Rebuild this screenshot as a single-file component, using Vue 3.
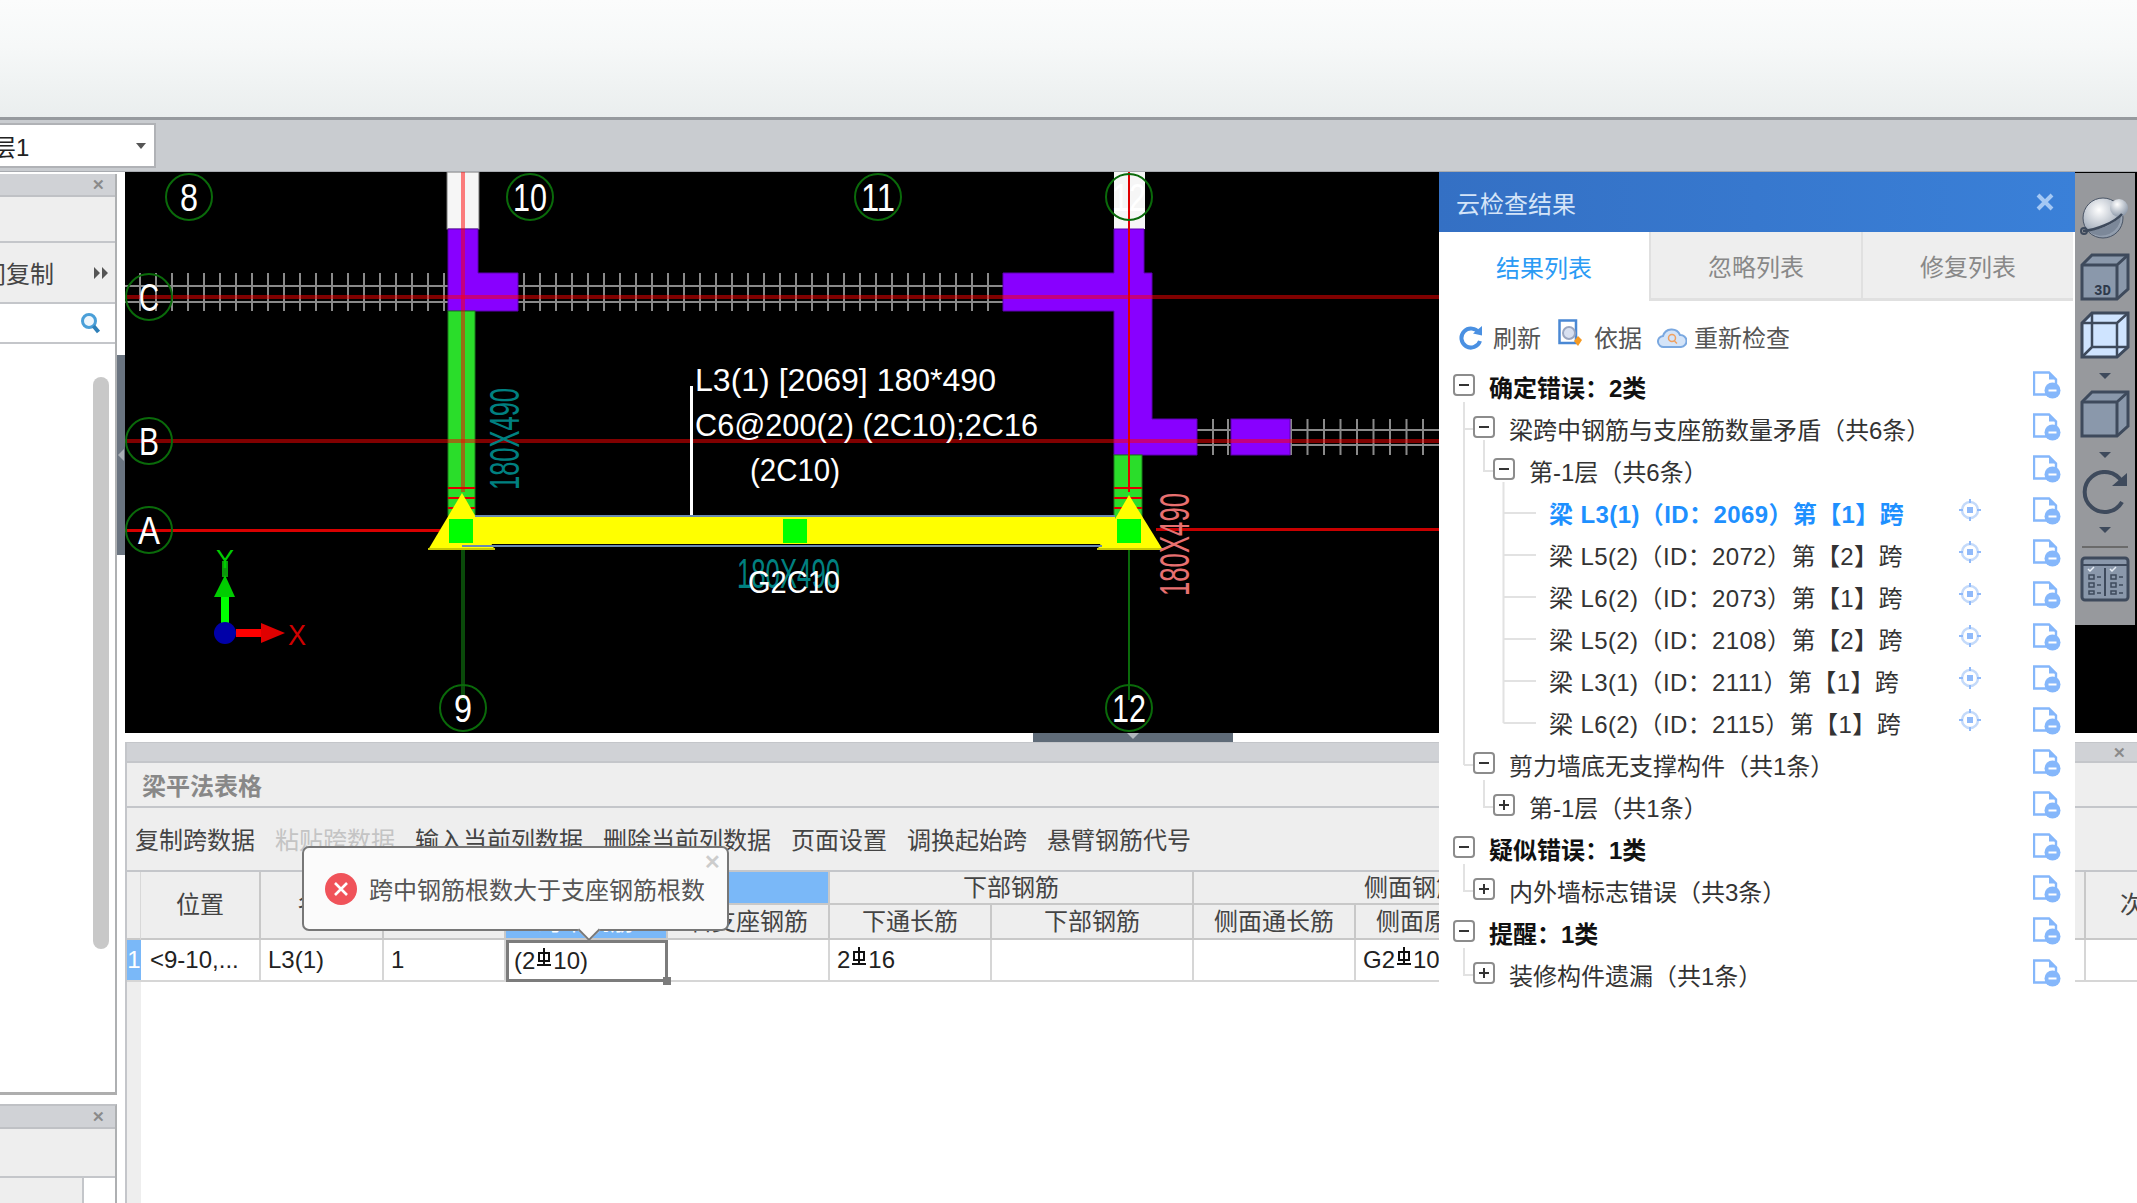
<script setup>
const range = (a, b, s) => { const r = []; for (let x = a; x <= b; x += s) r.push(x); return r; };
const ticksC = [...range(140, 444, 16), ...range(524, 1000, 16)];
const ticksB = [1213, 1228, ...range(1291, 1437, 16.5)];
const axes = [
  { t: '8', x: 189, y: 197, w: 18 }, { t: '10', x: 530, y: 197, w: 34 }, { t: '11', x: 878, y: 197, w: 34 },
  { t: '12', x: 1129, y: 197, w: 34 }, { t: 'C', x: 149, y: 297, w: 20 }, { t: 'B', x: 149, y: 441, w: 20 },
  { t: 'A', x: 149, y: 530, w: 22 }, { t: '9', x: 463, y: 708, w: 18 }, { t: '12', x: 1129, y: 708, w: 34 },
];
const toolbarItems = [
  { t: '复制跨数据' }, { t: '粘贴跨数据', off: true }, { t: '输入当前列数据' }, { t: '删除当前列数据' },
  { t: '页面设置' }, { t: '调换起始跨' }, { t: '悬臂钢筋代号' },
];
const rows = [
  { lv: 0, exp: '-', t: '确定错误：2类', bold: true },
  { lv: 1, exp: '-', t: '梁跨中钢筋与支座筋数量矛盾（共6条）' },
  { lv: 2, exp: '-', t: '第-1层（共6条）' },
  { lv: 3, t: '梁 L3(1)（ID：2069）第【1】跨', active: true },
  { lv: 3, t: '梁 L5(2)（ID：2072）第【2】跨' },
  { lv: 3, t: '梁 L6(2)（ID：2073）第【1】跨' },
  { lv: 3, t: '梁 L5(2)（ID：2108）第【2】跨' },
  { lv: 3, t: '梁 L3(1)（ID：2111）第【1】跨' },
  { lv: 3, t: '梁 L6(2)（ID：2115）第【1】跨' },
  { lv: 1, exp: '-', t: '剪力墙底无支撑构件（共1条）' },
  { lv: 2, exp: '+', t: '第-1层（共1条）' },
  { lv: 0, exp: '-', t: '疑似错误：1类', bold: true },
  { lv: 1, exp: '+', t: '内外墙标志错误（共3条）' },
  { lv: 0, exp: '-', t: '提醒：1类', bold: true },
  { lv: 1, exp: '+', t: '装修构件遗漏（共1条）' },
];
</script>

<template>
  <div class="app">
    <div class="topbar"></div>
    <div class="subbar">
      <div class="combo">
        <span class="combo-text">层1</span>
        <svg class="combo-arrow" width="12" height="8" viewBox="0 0 12 8"><path d="M1 1h10L6 7z" fill="#555" /></svg>
      </div>
    </div>

    <div class="main">
      <aside class="left">
        <div class="lp lp-top">
          <div class="lp-head"><span class="x">✕</span></div>
          <div class="lp-blank"></div>
          <div class="lp-row">
            <span class="lp-label">层间复制</span>
            <svg width="16" height="14" viewBox="0 0 16 14"><path d="M1 1l6 6-6 6zM9 1l6 6-6 6z" fill="#555" /></svg>
          </div>
          <div class="lp-search">
            <svg width="22" height="24" viewBox="0 0 22 24"><circle cx="9" cy="10" r="6.5" fill="#eef6fc" stroke="#4a9fd8" stroke-width="3" /><path d="M13.5 15l5 6" stroke="#2d7fb8" stroke-width="4" /></svg>
          </div>
          <div class="lp-list"><div class="lp-scroll"></div></div>
        </div>
        <div class="lp lp-bottom">
          <div class="lp-head"><span class="x">✕</span></div>
          <div class="lp-blank2"></div>
          <div class="lp-foot"><div class="lp-foot-l"></div><div class="lp-foot-r"><div class="foot-thumb"></div></div></div>
        </div>
      </aside>

      <div class="vsplit"><div class="vthumb"><span class="vtri"></span></div></div>

      <div class="work">
        <div class="canvas">
          <svg class="cad" width="2012" height="561" viewBox="125 172 2012 561">
            <rect x="125" y="172" width="2012" height="561" fill="#000" />
            <!-- walls -->
            <g stroke="#8a8a8a" stroke-width="2">
              <path d="M125 286H448M125 302H448M518 286H1003M518 302H1003M1197 430H1231M1197 445H1231M1290 430H1440M1290 445H1440" />
              <path v-for="x in ticksC" :key="'c' + x" :d="`M${x} 273V311`" />
              <path v-for="x in ticksB" :key="'b' + x" :d="`M${x} 419V455`" />
            </g>
            <!-- upper white stubs -->
            <rect x="447" y="172" width="32" height="57" fill="#f6f6f6" stroke="#777" stroke-width="1" />
            <rect x="1114" y="172" width="31" height="57" fill="#f6f6f6" />
            <!-- purple -->
            <path d="M448 229H478V273H518V311H448z" fill="#8800ff" stroke="#5d00b0" stroke-width="1" />
            <path d="M1114 229H1144V273H1152V419H1197V455H1114V311H1003V273H1114z" fill="#8800ff" stroke="#5d00b0" stroke-width="1" />
            <rect x="1231" y="419" width="59" height="36" fill="#8800ff" stroke="#5d00b0" stroke-width="1" />
            <!-- green columns -->
            <rect x="448" y="311" width="27" height="205" fill="#2add2a" stroke="#1b7a1b" stroke-width="1" />
            <rect x="1114" y="455" width="28" height="65" fill="#2add2a" stroke="#1b7a1b" stroke-width="1" />
            <!-- axis lines -->
            <rect x="125" y="295" width="1315" height="4" fill="#f00" opacity=".5" />
            <rect x="125" y="439" width="1315" height="4" fill="#f00" opacity=".5" />
            <rect x="125" y="529" width="315" height="3" fill="#d80000" />
            <rect x="1156" y="528" width="284" height="3" fill="#c80000" />
            <rect x="461" y="172" width="4" height="320" fill="#f00" opacity=".5" />
            <rect x="1128" y="172" width="2" height="320" fill="#e00000" />
            <path d="M448 488H475M448 498H475M448 508H475M1114 488H1142M1114 498H1142M1114 508H1142" stroke="#e00000" stroke-width="2" />
            <rect x="461" y="550" width="4" height="150" fill="#0a4a0a" />
            <rect x="1128" y="550" width="2" height="150" fill="#0a6a0a" />
            <!-- triangles -->
            <path d="M462 493L495 550H428z" fill="#ff0" />
            <path d="M1129 495L1163 550H1097z" fill="#ff0" />
            <path d="M428 549H495M1097 549H1163" stroke="#c8c800" stroke-width="2" />
            <!-- beam -->
            <rect x="475" y="515" width="640" height="2" fill="#6a8ab0" />
            <rect x="475" y="517" width="640" height="27" fill="#ff0" />
            <rect x="462" y="545" width="640" height="2" fill="#6a8ab0" />
            <rect x="449" y="519" width="24" height="24" fill="#0f0" />
            <rect x="783" y="519" width="24" height="24" fill="#0f0" />
            <rect x="1117" y="519" width="24" height="24" fill="#0f0" />
            <!-- leader -->
            <rect x="690" y="386" width="3" height="129" fill="#fff" />
            <!-- labels -->
            <g class="cad-text">
              <text x="695" y="391" textLength="301" lengthAdjust="spacingAndGlyphs" font-size="32">L3(1) [2069] 180*490</text>
              <text x="695" y="436" textLength="343" lengthAdjust="spacingAndGlyphs" font-size="32">C6@200(2) (2C10);2C16</text>
              <text x="750" y="481" textLength="90" lengthAdjust="spacingAndGlyphs" font-size="32">(2C10)</text>
              <text class="teal" x="737" y="588" textLength="103" lengthAdjust="spacingAndGlyphs" font-size="42">180X490</text>
              <text x="748" y="593" textLength="92" lengthAdjust="spacingAndGlyphs" font-size="32">G2C10</text>
              <text class="teal" transform="translate(519 490) rotate(-90)" textLength="102" lengthAdjust="spacingAndGlyphs" font-size="42">180X490</text>
              <text class="salmon" transform="translate(1189 596) rotate(-90)" textLength="103" lengthAdjust="spacingAndGlyphs" font-size="42">180X490</text>
            </g>
            <g v-for="(a, i) in axes" :key="i">
              <circle :cx="a.x" :cy="a.y" r="23" fill="none" stroke="#0a6a0a" stroke-width="2" />
              <text class="axis-t" :x="a.x - a.w / 2" :y="a.y + 14" :textLength="a.w" lengthAdjust="spacingAndGlyphs" font-size="38">{{ a.t }}</text>
            </g>
            <!-- UCS -->
            <rect x="222" y="561" width="6" height="16" fill="#0a9a0a" />
            <path d="M225 575L235 597H214z" fill="#0c0" />
            <rect x="221" y="597" width="8" height="26" fill="#0f0" />
            <rect x="236" y="629" width="26" height="8" fill="#f00" />
            <path d="M261 623L285 633L261 643z" fill="#e00000" />
            <circle cx="225" cy="633" r="11" fill="#0000a8" />
            <text class="ucs" x="216" y="568" font-size="25" fill="#0c0" textLength="18" lengthAdjust="spacingAndGlyphs">Y</text>
            <text class="ucs" x="288" y="645" font-size="30" fill="#d00000" textLength="18" lengthAdjust="spacingAndGlyphs">X</text>
          </svg>
        </div>

        <div class="hsplit"><div class="hthumb"><span class="htri"></span></div></div>

        <section class="bottom">
          <div class="b-head"><span class="x b-x">✕</span></div>
          <div class="b-title">梁平法表格</div>
          <div class="b-tools">
            <span v-for="it in toolbarItems" :key="it.t" :class="{ off: it.off }">{{ it.t }}</span>
          </div>

          <div class="grid">
            <div class="c h gut r2"></div>
            <div class="c h r2">位置</div>
            <div class="c h r2">名称</div>
            <div class="c h r2">跨号</div>
            <div class="c h blue span2">上部钢筋</div>
            <div class="c h span2">下部钢筋</div>
            <div class="c h span2">侧面钢筋</div>
            <div class="c h r2"></div>
            <div class="c h r2 ciliang">次梁宽度</div>
            <div class="c h blue2">跨中钢筋</div>
            <div class="c h">右支座钢筋</div>
            <div class="c h">下通长筋</div>
            <div class="c h">下部钢筋</div>
            <div class="c h">侧面通长筋</div>
            <div class="c h side">侧面原位标注筋</div>

            <div class="c d gut-on">1</div>
            <div class="c d l pos">&lt;9-10,...</div>
            <div class="c d l">L3(1)</div>
            <div class="c d l">1</div>
            <div class="c d l cur">
              (2<svg class="bar" width="18" height="19" viewBox="0 0 18 19"><path d="M4 5h10v8H4zM9 0v17M2 17h14" fill="none" stroke="#111" stroke-width="2" /></svg>10)
              <span class="handle"></span>
            </div>
            <div class="c d"></div>
            <div class="c d l">2<svg class="bar" width="18" height="19" viewBox="0 0 18 19"><path d="M4 5h10v8H4zM9 0v17M2 17h14" fill="none" stroke="#111" stroke-width="2" /></svg>16</div>
            <div class="c d"></div>
            <div class="c d"></div>
            <div class="c d l g2">G2<svg class="bar" width="18" height="19" viewBox="0 0 18 19"><path d="M4 5h10v8H4zM9 0v17M2 17h14" fill="none" stroke="#111" stroke-width="2" /></svg>10</div>
            <div class="c d"></div>
            <div class="c d"></div>
          </div>
          <div class="rest"><div class="rest-gut"></div></div>

          <div class="tip">
            <span class="tip-x">✕</span>
            <svg width="32" height="32" viewBox="0 0 32 32"><circle cx="16" cy="16" r="16" fill="#f0535a" /><path d="M10 10l12 12M22 10L10 22" stroke="#fff" stroke-width="2.6" /></svg>
            <span class="tip-text">跨中钢筋根数大于支座钢筋根数</span>
            <span class="tip-arrow"></span>
          </div>
        </section>
      </div>

      <!-- floating result panel -->
      <div class="panel">
        <div class="p-title">
          <span>云检查结果</span>
          <svg width="20" height="20" viewBox="0 0 20 20"><path d="M3 3l14 14M17 3L3 17" stroke="#a4c8f4" stroke-width="4" /></svg>
        </div>
        <div class="tabs">
          <div class="tab on">结果列表</div>
          <div class="tab">忽略列表</div>
          <div class="tab">修复列表</div>
        </div>
        <div class="p-tools">
          <svg width="24" height="26" viewBox="0 0 24 26"><path d="M20 9A9.5 9.5 0 1 0 21 17" fill="none" stroke="#4a90e2" stroke-width="4" /><path d="M14 9.5L23 2v9.500z" fill="#4a90e2" /></svg>
          <span class="tt t1">刷新</span>
          <svg class="ic2" width="26" height="30" viewBox="0 0 26 30"><path d="M1.500 1.500H18V24H1.500z" fill="#fff" stroke="#4a88d4" stroke-width="2.500" /><circle cx="11" cy="14" r="6" fill="#d8e0f0" stroke="#9aa6c0" stroke-width="2" /><path d="M20 17l4 4-4 6-4-5z" fill="#f59a23" /></svg>
          <span class="tt t2">依据</span>
          <svg class="ic3" width="30" height="24" viewBox="0 0 30 24"><path d="M7 22a5.500 5.500 0 0 1-1-11 9 9 0 0 1 17-1 6 6 0 0 1 1 12z" fill="#d4e4f8" stroke="#7aa8e0" stroke-width="2" /><circle cx="15" cy="13" r="3.500" fill="none" stroke="#f0a060" stroke-width="1.500" /><path d="M17.500 16l2.500 2.500" stroke="#f0a060" stroke-width="1.500" /></svg>
          <span class="tt t3">重新检查</span>
        </div>

        <div class="tree">
          <svg class="links" width="100" height="620" viewBox="0 0 100 620">
            <path d="M24 36V399M24 63H33M24 399H33M24 498V525H33M24 582V609H33M44 74V105H54M44 414V441H54M63.500 116V357M63.500 147H96M63.500 189H96M63.500 231H96M63.500 273H96M63.500 315H96M63.500 357H96" fill="none" stroke="#e2e2e2" stroke-width="2" />
          </svg>
          <div v-for="(r, i) in rows" :key="i" class="row" :class="['lv' + r.lv, { bold: r.bold, hot: r.active }]">
            <svg v-if="r.exp" class="exp" width="22" height="22" viewBox="0 0 22 22">
              <rect x="1" y="1" width="20" height="20" rx="3" fill="#fff" stroke="#8c8c8c" stroke-width="2" />
              <path v-if="r.exp === '-'" d="M6 11h10" stroke="#333" stroke-width="2" />
              <path v-else d="M6 11h10M11 6v10" stroke="#333" stroke-width="2" />
            </svg>
            <span class="label">{{ r.t }}</span>
            <span class="grow"></span>
            <svg v-if="r.lv === 3" class="target" width="24" height="24" viewBox="0 0 24 24">
              <circle cx="12" cy="12" r="8" fill="none" stroke="#c4dafa" stroke-width="2.500" />
              <path d="M12 1v4M12 19v4M1 12h4M19 12h4" stroke="#90bafa" stroke-width="2" />
              <rect x="9" y="9" width="6" height="6" fill="#90bafa" />
            </svg>
            <svg class="file" width="28" height="28" viewBox="0 0 28 28">
              <path d="M1 1.500H16L23 8.500V23.500H1z" fill="#fff" stroke="#85b7fb" stroke-width="2.400" />
              <path d="M16 1.500V8.500H23" fill="#85b7fb" />
              <circle cx="19.500" cy="19.500" r="8" fill="#85b7fb" />
              <path d="M15.500 19.500h8" stroke="#fff" stroke-width="2" />
            </svg>
          </div>
        </div>
      </div>

      <!-- floating view strip -->
      <div class="strip">
        <svg class="i1" width="54" height="46" viewBox="0 0 54 46">
          <defs>
            <radialGradient id="ball" cx=".4" cy=".3" r=".8"><stop offset="0" stop-color="#fff" /><stop offset="1" stop-color="#7d8b9e" /></radialGradient>
          </defs>
          <circle cx="25" cy="24" r="20" fill="url(#ball)" stroke="#4a5566" stroke-width="1" />
          <path d="M10 37C22 36 36 30 43 22A20 20 0 0 1 10 37z" fill="#7c8899" />
          <circle cx="41" cy="14" r="9" fill="url(#ball)" />
          <path d="M5 37C18 36 36 29 44 20" fill="none" stroke="#3e4a5c" stroke-width="2.500" />
          <circle cx="6" cy="37" r="3" fill="none" stroke="#3e4a5c" stroke-width="2" />
        </svg>
        <svg class="i2" width="50" height="48" viewBox="0 0 50 48">
          <path d="M2 12L12 2H48V36L37 46H2z" fill="#8a98ab" stroke="#3e4a5c" stroke-width="3" />
          <path d="M2 12H37V46M37 12L48 2" fill="none" stroke="#3e4a5c" stroke-width="3" />
          <text class="txt3d" x="14" y="42" font-size="14">3D</text>
        </svg>
        <svg class="i3" width="50" height="48" viewBox="0 0 50 48">
          <path d="M2 12L12 2H48V36L37 46H2z" fill="#cfe4ff" stroke="#3e4a5c" stroke-width="3" />
          <path d="M2 12H37V46M37 12L48 2M12 2V36H48M12 36L2 46" fill="none" stroke="#3e4a5c" stroke-width="2.500" />
        </svg>
        <svg class="arr" width="14" height="8" viewBox="0 0 14 8"><path d="M1 1h12L7 7z" fill="#3e4a5c" /></svg>
        <svg class="i4" width="50" height="48" viewBox="0 0 50 48">
          <path d="M2 12L12 2H48V36L37 46H2z" fill="#8a98ab" stroke="#3e4a5c" stroke-width="3" />
          <path d="M2 12H37V46M37 12L48 2" fill="none" stroke="#3e4a5c" stroke-width="3" />
        </svg>
        <svg class="arr a2" width="14" height="8" viewBox="0 0 14 8"><path d="M1 1h12L7 7z" fill="#3e4a5c" /></svg>
        <svg class="i5" width="50" height="46" viewBox="0 0 50 46">
          <path d="M42 12A20 20 0 1 0 42 32" fill="none" stroke="#3e4a5c" stroke-width="4" />
          <path d="M32 16H47V3z" fill="#3e4a5c" />
        </svg>
        <svg class="arr a3" width="14" height="8" viewBox="0 0 14 8"><path d="M1 1h12L7 7z" fill="#3e4a5c" /></svg>
        <div class="s-line"></div>
        <svg class="i6" width="50" height="46" viewBox="0 0 50 46">
          <rect x="2" y="2" width="46" height="42" rx="3" fill="#8a98ab" stroke="#3e4a5c" stroke-width="3" />
          <path d="M25 12V40M3 9H47" stroke="#3e4a5c" stroke-width="2" />
          <path d="M9 19h5v4H9zM9 27h5v4H9zM9 35h5v3H9zM31 19h5v4h-5zM31 27h5v4h-5zM31 35h5v3h-5z" fill="none" stroke="#3e4a5c" stroke-width="1.500" />
          <path d="M17 21h4M17 29h4M17 37h4M39 21h4M39 29h4M39 37h4" stroke="#3e4a5c" stroke-width="1.500" />
          <path d="M8 13l2 2 4-4M30 13l2 2 4-4" fill="none" stroke="#e6edf5" stroke-width="1.500" />
        </svg>
      </div>
    </div>
  </div>
</template>

<style>
html, body { margin: 0; background: #fff; }
</style>

<style scoped>
.app {
  position: relative;
  width: 2137px;
  height: 1203px;
  overflow: hidden;
  background: #fff;
  font-family: "Liberation Sans", "Noto Sans CJK SC", sans-serif;
  font-size: 24px;
  color: #333;
}
.topbar {
  height: 117px;
  background: linear-gradient(#fbfcfc, #f6f8f8 40%, #eaeeee);
  border-bottom: 3px solid #969a9e;
}
.subbar {
  display: flex;
  height: 52px;
  padding-top: 3px;
  box-sizing: border-box;
  background: #c9ccd0;
  border-bottom: 1px solid #a8abb0;
}
.combo {
  position: relative;
  display: flex;
  align-items: center;
  width: 156px;
  height: 45px;
  box-sizing: border-box;
  background: #fff;
  border: 2px solid #b0b2b6;
  border-left: 0;
  color: #222;
}
.combo-text { margin-left: -8px; }
.combo-arrow { margin-left: auto; margin-right: 7px; }
.main { position: relative; display: flex; height: 1031px; }
.left { width: 117px; flex: none; }
.x { color: #8a8a8a; font-size: 15px; font-weight: 700; line-height: 1; }
.lp-head {
  display: flex;
  align-items: center;
  justify-content: flex-end;
  height: 21px;
  padding-right: 10px;
  background: #d0d2d6;
  border-bottom: 2px solid #bfc1c5;
}
.lp { box-sizing: border-box; border-right: 2px solid #aeb0b2; }
.lp-top {
  height: 921px;
  margin-top: 2px;
  display: flex;
  flex-direction: column;
  border-bottom: 3px solid #aeaeae;
}
.lp-blank { height: 44px; background: #eee; border-bottom: 2px solid #c4c6ca; }
.lp-row {
  display: flex;
  align-items: center;
  justify-content: space-between;
  height: 59px;
  padding-right: 6px;
  background: #eee;
  border-bottom: 2px solid #c4c6ca;
  overflow: hidden;
}
.lp-label { margin-left: -42px; white-space: nowrap; color: #444; }
.lp-search {
  display: flex;
  align-items: center;
  justify-content: flex-end;
  height: 38px;
  padding-right: 13px;
  border-bottom: 2px solid #c4c6ca;
}
.lp-list { flex: 1; padding: 33px 0 0 93px; }
.lp-scroll { width: 16px; height: 572px; border-radius: 8px; background: #c8c8c8; }
.lp-bottom { margin-top: 9px; height: 101px; border-top: 2px solid #bfc1c5; }
.lp-blank2 { height: 47px; background: #eee; border-bottom: 2px solid #c4c6ca; }
.lp-foot { display: flex; height: 40px; }
.lp-foot-l { width: 82px; background: #eee; border-right: 2px solid #c4c6ca; }
.lp-foot-r { flex: 1; display: flex; justify-content: center; padding-top: 28px; }
.foot-thumb { width: 14px; height: 20px; border-radius: 7px 7px 0 0; background: #ccc; }
.vsplit { width: 8px; flex: none; padding-top: 183px; }
.vthumb { position: relative; height: 200px; background: #6a7480; }
.vtri {
  position: absolute;
  left: 1px;
  top: 94px;
  border: 6px solid transparent;
  border-left: 0;
  border-right: 6px solid #aab0b6;
}
.work { width: 2012px; flex: none; display: flex; flex-direction: column; }
.canvas { height: 561px; flex: none; }
.cad { display: block; }
.cad-text { font-family: "Liberation Sans", sans-serif; fill: #fff; }
.teal { fill: #008080; }
.salmon { fill: #e87070; }
.axis-t { fill: #fff; font-family: "Liberation Sans", sans-serif; }
.ucs { font-family: "Liberation Sans", sans-serif; }
.txt3d { font-family: "Liberation Mono", monospace; fill: #2e3a4c; font-weight: 700; }
.hsplit { height: 9px; flex: none; }
.hthumb { position: relative; width: 200px; height: 9px; margin-left: 908px; background: #5f6b78; }
.htri {
  position: absolute;
  left: 94px;
  top: 0;
  border: 6px solid transparent;
  border-bottom: 0;
  border-top: 6px solid #b0b6bc;
}
.bottom { position: relative; flex: 1; display: flex; flex-direction: column; border-left: 2px solid #c4c6ca; }
.b-head {
  display: flex;
  align-items: center;
  justify-content: flex-end;
  flex: none;
  height: 21px;
  box-sizing: border-box;
  padding-right: 11px;
  background: #d0d2d6;
  border-top: 1px solid #c4c6ca;
  border-bottom: 2px solid #c4c6ca;
}
.b-title {
  flex: none;
  height: 45px;
  box-sizing: border-box;
  display: flex;
  align-items: center;
  padding-left: 15px;
  background: #eee;
  border-bottom: 2px solid #c4c6ca;
  color: #888;
  font-weight: 700;
}
.b-tools {
  flex: none;
  height: 64px;
  box-sizing: border-box;
  display: flex;
  align-items: center;
  gap: 20px;
  padding: 0 0 2px 8px;
  background: #eee;
  border-bottom: 2px solid #c4c6ca;
  color: #444;
  white-space: nowrap;
}
.off { color: #c4c4c4; }
.grid {
  flex: none;
  display: grid;
  grid-template-columns: 14px 120px 123px 122px 162px 162px 162px 202px 162px 276px 454px 164px;
  grid-template-rows: 33px 35px 42px;
}
.c {
  box-sizing: border-box;
  display: flex;
  align-items: center;
  justify-content: center;
  min-width: 0;
  min-height: 0;
  overflow: hidden;
  white-space: nowrap;
  line-height: 1;
  border-right: 2px solid #c8c8c8;
  border-bottom: 2px solid #c8c8c8;
}
.h { background: #eee; color: #444; }
.r2 { grid-row: span 2; }
.span2 { grid-column: span 2; }
.gut { border-right: 1px solid #d8d8d8; }
.blue { background: #7ab8f8; color: #fff; }
.blue2 { background: #7ab8f8; color: #fff; }
.side { justify-content: flex-start; padding-left: 20px; }
.ciliang { justify-content: flex-start; padding-left: 34px; border-right: 0; }
.d { background: #fff; color: #222; border-color: #d6d6d6; }
.l { justify-content: flex-start; padding-left: 7px; overflow: visible; }
.pos { padding-left: 9px; }
.gut-on { background: #7ab8f8; color: #fff; border-right: 0; }
.g2 { padding-left: 7px; overflow: hidden; }
.cur { position: relative; border: 3px solid #7c7c7c; padding-left: 5px; z-index: 1; }
.handle { position: absolute; right: -6px; bottom: -6px; width: 8px; height: 8px; background: #7c7c7c; }
.bar { margin: -8px 0 0; flex: none; }
.rest { flex: 1; display: flex; }
.rest-gut { width: 14px; background: #eee; }
.tip {
  position: absolute;
  left: 175px;
  top: 104px;
  z-index: 2;
  box-sizing: border-box;
  display: flex;
  align-items: center;
  width: 427px;
  height: 85px;
  padding-left: 21px;
  background: #fbfbfb;
  border: 2px solid #777;
  border-radius: 7px;
}
.tip-text { margin-left: 12px; color: #555; white-space: nowrap; }
.tip-x { position: absolute; right: 6px; top: 4px; color: #ccc; font-size: 20px; font-weight: 700; line-height: 1; }
.tip-arrow {
  position: absolute;
  left: 277px;
  bottom: -9px;
  width: 14px;
  height: 14px;
  background: #fbfbfb;
  border-right: 2px solid #777;
  border-bottom: 2px solid #777;
  transform: rotate(45deg);
}
.panel {
  position: absolute;
  left: 1439px;
  top: 0;
  z-index: 3;
  width: 636px;
  height: 849px;
  background: #fff;
  display: flex;
  flex-direction: column;
}
.p-title {
  flex: none;
  height: 60px;
  display: flex;
  align-items: center;
  justify-content: space-between;
  padding: 0 20px 0 17px;
  background: linear-gradient(90deg, #3470c4, #3a80d8);
  color: #d4e4f8;
}
.tabs { flex: none; display: flex; height: 69px; padding-right: 2px; }
.tab {
  flex: 1;
  display: flex;
  align-items: center;
  justify-content: center;
  background: #eee;
  color: #888;
  border-bottom: 3px solid #e0e0e0;
  border-right: 2px solid #e0e0e0;
  box-sizing: border-box;
}
.tab:last-child { border-right: 0; }
.tab.on { background: #fff; color: #2a9bf5; border-bottom: 0; }
.p-tools {
  flex: none;
  height: 65px;
  box-sizing: border-box;
  display: flex;
  align-items: center;
  padding: 6px 0 0 20px;
  color: #555;
}
.tt { white-space: nowrap; }
.t1 { margin-left: 10px; }
.ic2 { margin-left: 17px; margin-top: -6px; }
.t2 { margin-left: 10px; }
.ic3 { margin-left: 15px; }
.t3 { margin-left: 7px; }
.tree { position: relative; flex: none; margin-top: -1px; padding-left: 1px; }
.links { position: absolute; left: 1px; top: 1px; }
.row {
  position: relative;
  display: flex;
  align-items: center;
  height: 42px;
  padding-right: 14px;
  color: #333;
  white-space: nowrap;
}
.lv0 { padding-left: 13px; }
.lv1 { padding-left: 33px; }
.lv2 { padding-left: 53px; }
.lv3 { padding-left: 109px; }
.lv3 .label { letter-spacing: .4px; color: #333; }
.exp { flex: none; margin-right: 14px; margin-top: -3px; }
.bold .label { font-weight: 700; color: #111; }
.row.hot .label { font-weight: 700; color: #1e90ff; }
.grow { flex: 1; }
.target { flex: none; margin: -5px 51px 0 0; }
.file { flex: none; margin-top: -3px; }
.strip {
  position: absolute;
  left: 2075px;
  top: 1px;
  z-index: 3;
  box-sizing: border-box;
  width: 60px;
  height: 452px;
  padding-top: 21px;
  display: flex;
  flex-direction: column;
  align-items: center;
  background: #97999d;
}
.i2 { margin-top: 13px; }
.i3 { margin-top: 10px; }
.arr { margin-top: 13px; }
.i4 { margin-top: 10px; }
.a2 { margin-top: 13px; }
.i5 { margin-top: 11px; }
.a3 { margin-top: 10px; }
.s-line { width: 46px; height: 2px; margin-top: 12px; background: #6a6a6a; }
.i6 { margin-top: 8px; }
</style>
